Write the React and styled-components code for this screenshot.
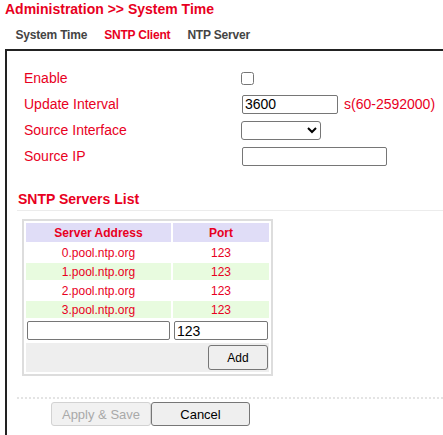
import React from 'react'
import styled, { createGlobalStyle } from 'styled-components'

const GlobalStyle = createGlobalStyle`
  body {
    margin: 0;
    overflow: hidden;
    background: #fff;
    font-family: "Liberation Sans", Arial, sans-serif;
  }
`

const RED = '#e8001e'

const Page = styled.div`
  padding-left: 5px;
`

const Title = styled.h1`
  margin: 0;
  font-size: 14px;
  line-height: 18px;
  font-weight: bold;
  color: ${RED};
`

const Tabs = styled.div`
  display: flex;
  margin-left: 2px;
  padding-top: 9px;
`

const Tab = styled.span`
  padding: 0 8.5px;
  font-size: 12px;
  line-height: 16px;
  font-weight: bold;
  letter-spacing: -0.2px;
  color: ${p => (p.$active ? RED : '#444')};
`

const Box = styled.div`
  margin-top: 6px;
  border-top: 2px solid #222;
  border-left: 2px solid #222;
  height: 400px;
`

const Form = styled.div`
  display: grid;
  grid-template-columns: 217px auto;
  grid-auto-rows: 26px;
  align-items: center;
  padding: 14px 0 0 17px;
`

const Label = styled.span`
  font-size: 14px;
  color: ${RED};
`

const Control = styled.div`
  display: flex;
  align-items: center;
`

const Check = styled.input`
  margin: 0;
  width: 13px;
  height: 13px;
`

const TextInput = styled.input`
  box-sizing: border-box;
  width: ${p => p.$w}px;
  height: 19px;
  margin: 0 0 0 1px;
  padding: 0 2px;
  border: 1px solid #767676;
  border-radius: 2px;
  font-family: inherit;
  font-size: 14px;
  color: #000;
`

const Unit = styled.span`
  margin-left: 6px;
  font-size: 14px;
  color: ${RED};
`

const Select = styled.select`
  box-sizing: border-box;
  width: 80px;
  height: 19px;
  margin: 0;
  border: 1px solid #767676;
  border-radius: 3px;
  background: #fff;
`

const Section = styled.div`
  margin-left: 10px;
`

const Heading = styled.h2`
  margin: 21px 0 0;
  padding-left: 1px;
  padding-bottom: 2px;
  font-size: 14px;
  line-height: 18px;
  font-weight: bold;
  color: ${RED};
  border-bottom: 1px solid #ececec;
`

const Table = styled.table`
  margin: 8px 0 0 5px;
  border: 2px solid #ddd;
  border-spacing: 2px;
  font-size: 12px;
`

const Th = styled.th`
  width: ${p => p.$w}px;
  height: 19px;
  padding: 0;
  background: #e0ddf7;
  color: ${RED};
  font-weight: bold;
  text-align: center;
`

const Td = styled.td`
  height: 17px;
  padding: 0;
  text-align: center;
  color: ${RED};
  background: ${p => (p.$alt ? '#e8fbdf' : '#fff')};
`

const InputCell = styled.td`
  padding: 1px;
`

const CellInput = styled.input`
  box-sizing: border-box;
  width: 100%;
  height: 19px;
  margin: 0;
  padding: 0 2px;
  border: 1px solid #767676;
  border-radius: 2px;
  font-family: inherit;
  font-size: 14px;
  color: #000;
`

const AddCell = styled.td`
  height: 29px;
  padding: 0 1px 0 0;
  background: #eee;
  text-align: right;
`

const Button = styled.button`
  box-sizing: border-box;
  width: ${p => p.$w}px;
  height: ${p => p.$h}px;
  margin: 0;
  padding: 0;
  border: 1px solid ${p => (p.disabled ? '#d2d2d2' : '#767676')};
  border-radius: 3px;
  background: ${p => (p.disabled ? '#f1f1f1' : '#efefef')};
  color: ${p => (p.disabled ? '#a9a9a9' : '#000')};
  font-family: inherit;
  font-size: ${p => p.$fs}px;
`

const Footer = styled.div`
  margin-top: 21px;
  border-top: 2px dotted #e4e4e4;
  padding: 3px 0 0 34px;
  display: flex;
`

const servers = ['0.pool.ntp.org', '1.pool.ntp.org', '2.pool.ntp.org', '3.pool.ntp.org']

export default function App() {
  return (
    <Page>
      <GlobalStyle />
      <Title>Administration &gt;&gt; System Time</Title>
      <Tabs>
        <Tab>System Time</Tab>
        <Tab $active>SNTP Client</Tab>
        <Tab>NTP Server</Tab>
      </Tabs>
      <Box>
        <Form>
          <Label>Enable</Label>
          <Control>
            <Check type="checkbox" />
          </Control>
          <Label>Update Interval</Label>
          <Control>
            <TextInput $w={96} defaultValue="3600" />
            <Unit>s(60-2592000)</Unit>
          </Control>
          <Label>Source Interface</Label>
          <Control>
            <Select />
          </Control>
          <Label>Source IP</Label>
          <Control>
            <TextInput $w={145} />
          </Control>
        </Form>
        <Section>
          <Heading>SNTP Servers List</Heading>
          <Table>
            <thead>
              <tr>
                <Th $w={145}>Server Address</Th>
                <Th $w={96}>Port</Th>
              </tr>
            </thead>
            <tbody>
              {servers.map((s, i) => (
                <tr key={s}>
                  <Td $alt={i % 2 === 1}>{s}</Td>
                  <Td $alt={i % 2 === 1}>123</Td>
                </tr>
              ))}
              <tr>
                <InputCell>
                  <CellInput />
                </InputCell>
                <InputCell>
                  <CellInput defaultValue="123" />
                </InputCell>
              </tr>
              <tr>
                <AddCell colSpan={2}>
                  <Button $w={60} $h={25} $fs={12}>Add</Button>
                </AddCell>
              </tr>
            </tbody>
          </Table>
          <Footer>
            <Button $w={100} $h={24} $fs={13} disabled>Apply &amp; Save</Button>
            <Button $w={99} $h={24} $fs={13}>Cancel</Button>
          </Footer>
        </Section>
      </Box>
    </Page>
  )
}
